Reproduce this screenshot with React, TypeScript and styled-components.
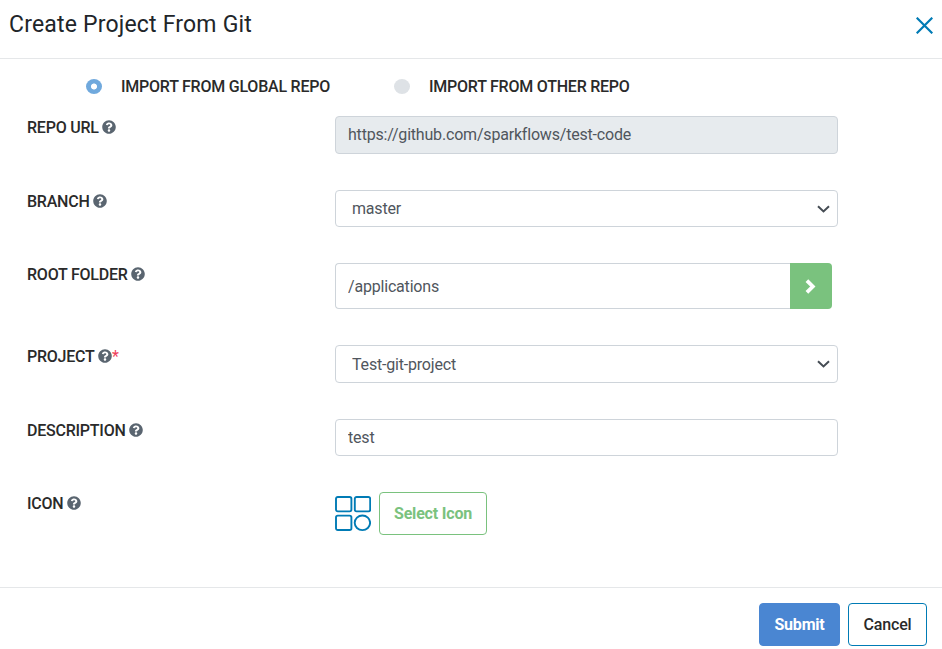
import React from "react";
import styled, { createGlobalStyle, css } from "styled-components";
import { FaQuestionCircle } from "react-icons/fa";

const GlobalStyle = createGlobalStyle`
  *, *::before, *::after { box-sizing: border-box; }
  body {
    margin: 0;
    background: #fff;
    color: #212529;
    font: 400 16px/24px Roboto, sans-serif;
    letter-spacing: -0.19px;
  }
  input, select, button { font: inherit; letter-spacing: inherit; margin: 0; }
`;

const Dialog = styled.form`
  display: flex;
  flex-direction: column;
  width: 100%;
  height: 649px;
  overflow: hidden;
`;

const Header = styled.header`
  display: flex;
  justify-content: space-between;
  align-items: flex-start;
  height: 59px;
  padding: 8px 9px 0 9px;
  border-bottom: 1px solid #e5e7e9;
`;

const Title = styled.h1`
  margin: 1px 0 0;
  font-size: 23px;
  line-height: 32px;
  font-weight: 400;
  letter-spacing: 0.19px;
`;

const CloseButton = styled.button`
  display: flex;
  margin-top: 9px;
  padding: 0;
  border: 0;
  background: none;
  color: #007bb5;
`;

const Body = styled.main`
  flex: 1;
  padding: 16px 27px 0;
`;

const SourceOptions = styled.div`
  display: flex;
  height: 41px;
  padding-left: 59px;
`;

const SourceOption = styled.label`
  display: flex;
  align-items: center;
  gap: 19px;
  width: 308px;
  height: 23px;
  font-weight: 500;
  letter-spacing: -0.23px;
  color: #2a2a2a;
  white-space: nowrap;
`;

const Radio = styled.input`
  appearance: none;
  flex: none;
  width: 16px;
  height: 15px;
  border-radius: 50%;
  background: #dee2e6;
  &:checked {
    background: radial-gradient(circle, #fff 2.6px, #70a9dd 3.4px);
  }
`;

const Fields = styled.div`
  display: flex;
  flex-direction: column;
  gap: 36px;
`;

const Row = styled.div`
  display: grid;
  grid-template-columns: 308px 503px;
  align-items: start;
`;

const Label = styled.label`
  display: flex;
  align-items: center;
  height: 23px;
  color: #2a2a2a;
  font-weight: 500;
  letter-spacing: -0.23px;
  svg { margin: -1px 0 0 3.5px; color: #5a6570; }
`;

const Required = styled.span`
  color: #f0405a;
  font-weight: 400;
`;

const control = css<{ $height: number }>`
  width: 100%;
  height: ${(p) => p.$height}px;
  border: 1px solid #ced4da;
  border-radius: 4px;
  color: #50565d;
  background-color: #fff;
  outline: none;
`;

const TextInput = styled.input<{ $height: number }>`
  ${control}
  padding: 0 12px;
  &:disabled { padding-bottom: 2px; background-color: #e7ebee; opacity: 1; }
`;

const Select = styled.select<{ $height: number }>`
  ${control}
  appearance: none;
  grid-area: 1 / 1;
  padding: ${(p) => (p.$height > 37 ? 1 : 0)}px 36px 0 16px;
`;

const SelectBox = styled.div`
  display: grid;
  align-items: center;
`;

const Caret = styled.svg`
  grid-area: 1 / 1;
  justify-self: end;
  margin-right: 8px;
  z-index: 1;
  pointer-events: none;
`;

const InputGroup = styled.div`
  display: flex;
  width: 497px;
  input { flex: 1; border-right: 0; border-radius: 4px 0 0 4px; }
`;

const BrowseButton = styled.button`
  display: grid;
  place-items: center;
  width: 42px;
  height: 46px;
  padding: 1px 1px 0 0;
  border: 0;
  border-radius: 0 4px 4px 0;
  background: #7ac27e;
  color: #fff;
`;

const IconPicker = styled.div`
  display: flex;
  align-items: center;
  gap: 8px;
`;

const Button = styled.button<{ $width: number; $tone: "outline" | "primary" | "plain" }>`
  width: ${(p) => p.$width}px;
  height: 43px;
  padding: 0;
  border-radius: 4px;
  font-weight: ${(p) => (p.$tone === "plain" ? 500 : 700)};
  border: 1px solid ${(p) => ({ outline: "#7ac27e", primary: "#4a86d2", plain: "#007bb5" })[p.$tone]};
  background: ${(p) => (p.$tone === "primary" ? "#4a86d2" : "#fff")};
  color: ${(p) => ({ outline: "#7ac27e", primary: "#fff", plain: "#2a2a2a" })[p.$tone]};
`;

const Footer = styled.footer`
  display: flex;
  justify-content: flex-end;
  gap: 8px;
  height: 62px;
  padding: 15px 15px 0;
  border-top: 1px solid #e5e7e9;
`;

const FieldLabel = ({ text, required }: { text: string; required?: boolean }) => (
  <Label>
    {text}
    <FaQuestionCircle size={14} />
    {required && <Required>*</Required>}
  </Label>
);

const Dropdown = ({ value, height }: { value: string; height: number }) => (
  <SelectBox>
    <Select $height={height} defaultValue={value}>
      <option>{value}</option>
    </Select>
    <Caret width="13" height="8" viewBox="0 0 13 8" fill="none" stroke="#454c54" strokeWidth="2">
      <path d="M1 1.2 6.5 6.4 12 1.2" />
    </Caret>
  </SelectBox>
);

const TilesIcon = () => (
  <svg width="36" height="36" viewBox="0 0 36 36" fill="none" stroke="#007bb5" strokeWidth="1.9">
    <rect x="1" y="1" width="15.4" height="14.4" rx="1.8" />
    <rect x="19.8" y="1" width="15.4" height="14.4" rx="1.8" />
    <rect x="1" y="19.6" width="15.4" height="14.4" rx="1.8" />
    <ellipse cx="27.4" cy="26.8" rx="7.7" ry="7.3" />
  </svg>
);

export default function App() {
  return (
    <>
      <GlobalStyle />
      <Dialog onSubmit={(e) => e.preventDefault()}>
        <Header>
          <Title>Create Project From Git</Title>
          <CloseButton type="button" aria-label="Close">
            <svg width="17" height="17" viewBox="0 0 17 17" fill="none" stroke="currentColor" strokeWidth="2.2">
              <path d="M.7.7 16.3 16.3M16.3.7.7 16.3" />
            </svg>
          </CloseButton>
        </Header>
        <Body>
          <SourceOptions>
            <SourceOption>
              <Radio type="radio" name="source" defaultChecked />
              IMPORT FROM GLOBAL REPO
            </SourceOption>
            <SourceOption>
              <Radio type="radio" name="source" />
              IMPORT FROM OTHER REPO
            </SourceOption>
          </SourceOptions>
          <Fields>
            <Row>
              <FieldLabel text="REPO URL" />
              <TextInput $height={38} disabled defaultValue="https://github.com/sparkflows/test-code" />
            </Row>
            <Row>
              <FieldLabel text="BRANCH" />
              <Dropdown value="master" height={37} />
            </Row>
            <Row>
              <FieldLabel text="ROOT FOLDER" />
              <InputGroup>
                <TextInput $height={46} defaultValue="/applications" />
                <BrowseButton type="button" aria-label="Browse">
                  <svg width="11" height="15" viewBox="0 0 11 15" fill="none" stroke="currentColor" strokeWidth="3.8">
                    <path d="M1.9 1.6 7.8 7.5 1.9 13.4" />
                  </svg>
                </BrowseButton>
              </InputGroup>
            </Row>
            <Row>
              <FieldLabel text="PROJECT" required />
              <Dropdown value="Test-git-project" height={38} />
            </Row>
            <Row>
              <FieldLabel text="DESCRIPTION" />
              <TextInput $height={37} defaultValue="test" />
            </Row>
            <Row>
              <FieldLabel text="ICON" />
              <IconPicker>
                <TilesIcon />
                <Button type="button" $width={108} $tone="outline">Select Icon</Button>
              </IconPicker>
            </Row>
          </Fields>
        </Body>
        <Footer>
          <Button type="submit" $width={81} $tone="primary">Submit</Button>
          <Button type="button" $width={79} $tone="plain">Cancel</Button>
        </Footer>
      </Dialog>
    </>
  );
}
